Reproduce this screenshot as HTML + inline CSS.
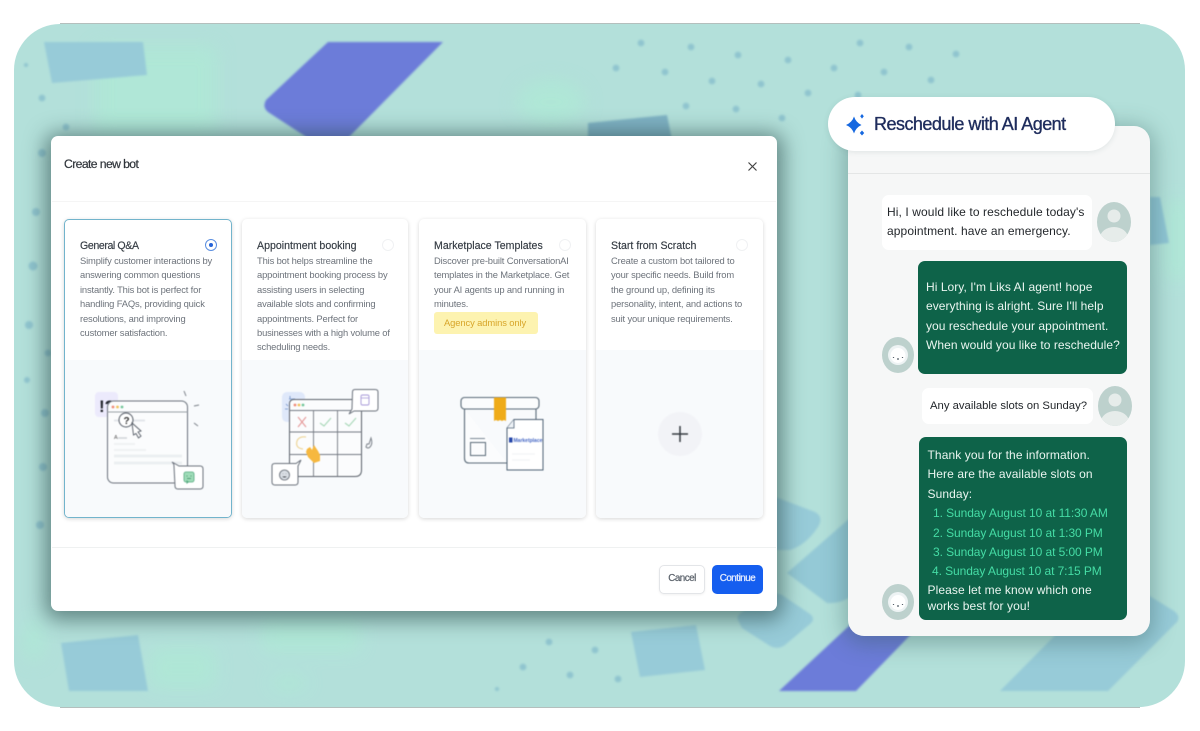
<!DOCTYPE html>
<html><head><meta charset="utf-8"><style>
html,body{margin:0;padding:0;background:#fff;width:1200px;height:731px;overflow:hidden}
*{box-sizing:border-box}
body{font-family:"Liberation Sans",sans-serif;position:relative}
.a{position:absolute}
.t{position:absolute;white-space:nowrap}
#bg{position:absolute;left:14px;top:24px;width:1171px;height:683px;border-radius:46px;background:#b3e0da;overflow:hidden}
#dlg{position:absolute;left:51px;top:136px;width:726px;height:475px;background:#fff;border-radius:7px;box-shadow:0 3px 20px 6px rgba(40,70,70,.58)}
.card{position:absolute;top:219px;height:299px;background:#fff;border-radius:5px;box-shadow:0 1px 4px rgba(0,0,0,.16);overflow:hidden}
.img{position:absolute;left:0;right:0;bottom:0;background:#f8fafc}
.h{font-size:10.6px;color:#333a42;line-height:14px;-webkit-text-stroke:.15px #333a42}
.d{font-size:9.4px;color:#6d737b;line-height:14px;letter-spacing:-.15px}
.radio{position:absolute;top:239px;width:12px;height:12px;border-radius:50%;border:1.5px solid #f0f1f3;background:#fff}
#chat{position:absolute;left:848px;top:126px;width:302px;height:510px;background:#f6f7f7;border-radius:16px;box-shadow:0 4px 22px 4px rgba(50,90,90,.38)}
.m{font-size:12px;line-height:16px;letter-spacing:.1px}
.w{color:#eaf5f0}
.g{color:#45dca5;letter-spacing:-.08px}
.k{color:#23272b}
.bb{position:absolute;background:#0e6349;border-radius:7px}
.wb{position:absolute;background:#fff;border-radius:7px}
.soft{filter:blur(.35px)}
.soft2{filter:blur(.5px)}
</style></head><body>
<div id="bg"></div>
<svg class="a" style="left:0;top:0" width="1200" height="731" viewBox="0 0 1200 731">
<defs>
<clipPath id="c"><rect x="14" y="24" width="1171" height="683" rx="46"/></clipPath>
<filter id="b1"><feGaussianBlur stdDeviation="1"/></filter>
<filter id="b2"><feGaussianBlur stdDeviation="9"/></filter>
</defs>
<g clip-path="url(#c)">
<g filter="url(#b2)" fill="#afe8d6" opacity=".85">
<rect x="95" y="46" width="122" height="88"/>
<rect x="262" y="620" width="98" height="32"/>
<rect x="150" y="648" width="66" height="40"/>
<ellipse cx="551" cy="102" rx="34" ry="22"/>
<ellipse cx="289" cy="683" rx="20" ry="8"/>
<rect x="1165" y="200" width="25" height="80"/>
<ellipse cx="34" cy="640" rx="10" ry="22"/>
</g>
<g filter="url(#b1)">
<path d="M44 42H143L147 75 52 83Z" fill="#97cbd8"/>
<path d="M328 42H443L346 140H311L268 112Q262 107 266 100Z" fill="#6c7bd9"/>
<path d="M588 123L667 115 672 140H588Z" fill="#7fb2c4"/>
<path d="M61 643L138 635 148 691H69Z" fill="#97cbd8"/>
<path d="M631 632L696 625 705 670 640 677Z" fill="#97cbd8"/>
<path d="M738 620Q736 616 742 612L770 595Q776 592 782 595L810 614Q816 619 810 624L785 645Q778 650 770 646L742 628Z" fill="#97cbd8"/>
<path d="M770 495L815 512Q824 517 818 527 806 545 790 550H770Z" fill="#97cbd8"/>
<path d="M787 573L850 518V597Q840 604 827 603Z" fill="#94c9d6"/>
<path d="M779 691H856L920 625 850 625Z" fill="#6c7bd9"/>
<path d="M1000 691H1108L1177 622Q1181 616 1174 611L1140 590 1090 600Z" fill="#97cbd8"/>
<path d="M1150 197H1160L1169 243 1150 245Z" fill="#8fc5d4"/>
<g fill="#90c5cf">
<circle cx="641" cy="43" r="3.4"/><circle cx="691" cy="47" r="3.4"/><circle cx="738" cy="55" r="3.4"/><circle cx="788" cy="60" r="3.4"/><circle cx="860" cy="43" r="3.4"/><circle cx="909" cy="47" r="3.4"/><circle cx="956" cy="54" r="3.4"/><circle cx="616" cy="68" r="3.4"/><circle cx="665" cy="72" r="3.4"/><circle cx="712" cy="81" r="3.4"/><circle cx="761" cy="84" r="3.4"/><circle cx="808" cy="93" r="3.4"/><circle cx="834" cy="68" r="3.4"/><circle cx="884" cy="72" r="3.4"/><circle cx="931" cy="80" r="3.4"/><circle cx="858" cy="95" r="3.4"/><circle cx="686" cy="106" r="3.4"/><circle cx="736" cy="109" r="3.4"/><circle cx="782" cy="118" r="3.4"/>
<circle cx="26" cy="65" r="2"/><circle cx="42" cy="98" r="3.4"/><circle cx="66" cy="127" r="3.4"/><circle cx="42" cy="153" r="4"/><circle cx="36" cy="212" r="4"/><circle cx="33" cy="266" r="4.5"/><circle cx="29" cy="325" r="4"/><circle cx="48" cy="353" r="3.4"/><circle cx="27" cy="380" r="3"/><circle cx="45" cy="413" r="4"/><circle cx="43" cy="467" r="4"/><circle cx="40" cy="525" r="4"/>
<circle cx="549" cy="642" r="3.4"/><circle cx="595" cy="650" r="3.4"/><circle cx="523" cy="667" r="3.4"/><circle cx="570" cy="675" r="3.4"/><circle cx="497" cy="689" r="2"/><circle cx="618" cy="679" r="3.4"/>
</g>
</g>
</g>
<path d="M60 23.500H1140M60 707.500H1140" stroke="#b4bfbd" stroke-width="1"/>
</svg>

<div id="dlg"></div>
<div class="a" style="left:52px;top:201px;width:724px;height:1px;background:#f5f5f5"></div>
<div class="a" style="left:52px;top:547px;width:724px;height:1px;background:#eff1f1"></div>
<div class="soft">
<div class="t" style="left:64px;top:157px;font-size:12.2px;line-height:15px;color:#30353b;-webkit-text-stroke:.2px #30353b;letter-spacing:-.6px">Create new bot</div>
<svg class="a" style="left:747px;top:161px" width="11" height="11" viewBox="0 0 11 11"><path d="M1.500 1.500L9.500 9.500M9.500 1.500L1.500 9.500" stroke="#444" stroke-width="1.200"/></svg>
</div>

<div class="card" style="left:64px;width:168px;border:1.5px solid #72b4cc"><div class="img" style="height:157px"></div></div>
<div class="card" style="left:242px;width:166px"><div class="img" style="height:158px"></div></div>
<div class="card" style="left:419px;width:167px"><div class="img" style="height:168px"></div></div>
<div class="card" style="left:596px;width:167px"><div class="img" style="height:168px"></div></div>

<div class="soft">
<div class="t h" style="left:80px;top:238.500px;letter-spacing:-.4px">General Q&amp;A</div>
<div class="t d" style="left:80px;top:254px;line-height:14.400px">Simplify customer interactions by<br>answering common questions<br>instantly. This bot is perfect for<br>handling FAQs, providing quick<br>resolutions, and improving<br>customer satisfaction.</div>
<div class="t h" style="left:257px;top:238.500px">Appointment booking</div>
<div class="t d" style="left:257px;top:254px;line-height:14.400px">This bot helps streamline the<br>appointment booking process by<br>assisting users in selecting<br>available slots and confirming<br>appointments. Perfect for<br>businesses with a high volume of<br>scheduling needs.</div>
<div class="t h" style="left:434px;top:238.500px">Marketplace Templates</div>
<div class="t d" style="left:434px;top:254px;line-height:14.400px">Discover pre-built ConversationAI<br>templates in the Marketplace. Get<br>your AI agents up and running in<br>minutes.</div>
<div class="a" style="left:434px;top:312px;width:104px;height:22px;background:#fdf3b0;border-radius:3px"></div>
<div class="t" style="left:444px;top:316px;font-size:9.400px;line-height:14px;color:#d8a62a;letter-spacing:-.1px">Agency admins only</div>
<div class="t h" style="left:611px;top:238.500px">Start from Scratch</div>
<div class="t d" style="left:611px;top:254px;line-height:14.400px">Create a custom bot tailored to<br>your specific needs. Build from<br>the ground up, defining its<br>personality, intent, and actions to<br>suit your unique requirements.</div>
</div>

<div class="radio" style="left:205px;border-color:#5b8fe0;background:#fff"><div class="a" style="left:2.500px;top:2.500px;width:4px;height:4px;border-radius:50%;background:#2563d8"></div></div>
<div class="radio" style="left:382px"></div>
<div class="radio" style="left:559px"></div>
<div class="radio" style="left:736px"></div>

<svg class="a soft2" style="left:0;top:0" width="1200" height="731" viewBox="0 0 1200 731">
<!-- card 1 illustration -->
<rect x="95" y="392" width="23" height="25" rx="4" fill="#eceafc"/>
<text x="99" y="412" font-family="Liberation Sans,sans-serif" font-size="17" font-weight="700" fill="#23262c">!?</text>
<rect x="107.500" y="401" width="80" height="82" rx="6" fill="#fbfcfd" stroke="#6b727c" stroke-width="1"/>
<path d="M107.500 412H187.500" stroke="#9a9fa6"/>
<circle cx="113" cy="407" r="1.400" fill="#ef8a78"/><circle cx="117.500" cy="407" r="1.400" fill="#f0c15a"/><circle cx="122" cy="407" r="1.400" fill="#73c69a"/>
<path d="M114 420.500H145" stroke="#e3e6ea" stroke-width="2"/>
<circle cx="126" cy="420" r="7" fill="#fff" stroke="#555c66"/>
<text x="123.500" y="424" font-family="Liberation Sans,sans-serif" font-size="10" font-weight="700" fill="#333">?</text>
<path d="M132 423L141 431 138 432 141 436 138.500 438 136 433.500 133.500 435Z" fill="#fff" stroke="#555c66" stroke-width=".9"/>
<text x="114" y="439" font-family="Liberation Sans,sans-serif" font-size="5.500" fill="#555">A</text>
<path d="M118 438H127" stroke="#d0d4d9" stroke-width="1.500"/>
<path d="M114 444H135M114 450H146" stroke="#eff1f3" stroke-width="2"/>
<path d="M114 456H182M114 463H182" stroke="#eceff1" stroke-width="3"/>
<path d="M186 396L184 391M194 406L199 405M194 423L198 426" stroke="#7a8088" stroke-width="1"/>
<path d="M174 466Q174 464 173 463L172 462 179 466H200Q203 466 203 469V486Q203 489 200 489H178Q175 489 175 486Z" fill="#fff" stroke="#6b727c"/>
<rect x="184" y="472" width="10" height="10" rx="2" fill="#9fdcb8" stroke="#55a97f" stroke-width=".8"/>
<path d="M186.500 480V484L189 482" fill="#55a97f"/>
<path d="M187 475.500V476.500M191 475.500V476.500M187 478.500H191" stroke="#3d8762" stroke-width=".8"/>
<!-- card 2 illustration -->
<rect x="282" y="392" width="23" height="30" rx="5" fill="#dfe8fa"/>
<path d="M289 399H295M286 404L288 406M285 409H288M290 396V399" stroke="#6e8ec6" stroke-width=".8"/>
<path d="M289.500 404Q289.500 399.500 294 399.500H355Q361.500 399.500 361.500 405V470Q361.500 476.500 355 476.500H295Q289.500 476.500 289.500 470Z" fill="#fbfcfd" stroke="#5a6069" stroke-width="1"/>
<path d="M289.500 410.500H361.500M289.500 432H361.500M289.500 454.500H361.500M313.500 410.500V476.500M337.500 410.500V476.500" stroke="#747a83" stroke-width=".9"/>
<circle cx="295" cy="405" r="1.400" fill="#ef8a78"/><circle cx="299" cy="405" r="1.400" fill="#f0c15a"/><circle cx="303" cy="405" r="1.400" fill="#73c69a"/>
<path d="M298 417L306 427M306 417L298 427" stroke="#e59a9a" stroke-width="1.100"/>
<path d="M320 423L324 426 331 418M345 423L349 426 356 418" fill="none" stroke="#a8d8b8" stroke-width="1.100"/>
<path d="M306 437Q299 436 297 441 295 448 303 449" fill="none" stroke="#eed69a" stroke-width="1.200"/>
<path d="M307 449L310 447 312 450 314 445 318 451 320 455 320 461 314 463 308 457 306 452Z" fill="#f6b83f"/>
<path d="M355 389.500H375Q378 389.500 378 392V408Q378 411 375 411H354L349 414 352 409 352.500 392Q352.500 389.500 355 389.500Z" fill="#fff" stroke="#6b727c"/>
<rect x="361" y="395" width="8" height="10" rx="1.500" fill="none" stroke="#a79ad8" stroke-width=".9"/>
<path d="M361 398H369" stroke="#a79ad8" stroke-width=".8"/>
<path d="M275 463.500H296L301 460 298 466V482Q298 485 295 485H275Q272 485 272 482V466Q272 463.500 275 463.500Z" fill="#fff" stroke="#6b727c"/>
<circle cx="284.500" cy="475" r="5" fill="#d9dee4" stroke="#5f6670" stroke-width=".8"/>
<path d="M282.500 476.500Q284.500 478 286.500 476.500M283 473.500V474M286 473.500V474" stroke="#5f6670" stroke-width=".6"/>
<path d="M371 438Q373 444 370 447 368 449 366 447L367 444 369 444Q370 441 371 438Z" fill="none" stroke="#7a8088" stroke-width="1"/>
<!-- card 3 illustration -->
<path d="M464.500 409V458Q464.500 463 469 463H507M536 409V419" fill="#fbfcfd" stroke="#5a6a78" stroke-width="1.100"/>
<rect x="461" y="397.500" width="78" height="11.500" rx="3.500" fill="#fbfcfd" stroke="#5a6a78" stroke-width="1.100"/>
<path d="M494 397.500H506V421L504 420 502 421 500 420 498 421 496 420 494 421Z" fill="#efab18"/>
<path d="M470 438.500H485" stroke="#7b8894" stroke-width="1"/>
<rect x="470.500" y="442.500" width="15" height="13" fill="none" stroke="#5a6a78" stroke-width="1"/>
<path d="M514 419.500H543V470H507V428Z" fill="#fff" stroke="#4f6275" stroke-width="1"/>
<path d="M507 428L514 428 514 419.500" fill="#eef2f6" stroke="#4f6275" stroke-width=".8"/>
<rect x="509" y="437.500" width="3.500" height="5" fill="#2546a8"/>
<text x="513.500" y="442" font-family="Liberation Sans,sans-serif" font-size="5" font-weight="700" fill="#4466c4">Marketplace</text>
<path d="M512 454H535M512 460H530" stroke="#f0f2f4"/>
<!-- card 4 -->
<circle cx="680" cy="434" r="22" fill="#f2f3f7"/>
<path d="M680 426V442M672 434H688" stroke="#343a40" stroke-width="1.500"/>
</svg>

<div class="soft">
<div class="a" style="left:659px;top:565px;width:46px;height:29px;background:#fff;border:1px solid #e3e5e8;border-radius:5px;box-shadow:0 1px 2px rgba(0,0,0,.06)"></div>
<div class="t" style="left:659px;top:572px;width:46px;text-align:center;font-size:9.800px;line-height:14px;color:#596069;-webkit-text-stroke:.2px #596069;letter-spacing:-.5px">Cancel</div>
<div class="a" style="left:712px;top:565px;width:51px;height:29px;background:#155eef;border-radius:5px"></div>
<div class="t" style="left:712px;top:572px;width:51px;text-align:center;font-size:9.800px;line-height:14px;color:#dfe9ff;-webkit-text-stroke:.3px #dfe9ff;letter-spacing:-.45px">Continue</div>
</div>

<div id="chat"></div>
<div class="a" style="left:848px;top:173px;width:302px;height:1px;background:#e4e6e6"></div>
<div class="a" style="left:828px;top:97px;width:287px;height:54px;background:#fff;border-radius:27px;box-shadow:0 1px 6px rgba(60,90,90,.12)"></div>
<svg class="a" style="left:843px;top:112px" width="24" height="26" viewBox="0 0 24 26">
<path d="M11 4.500Q13 10.500 18.500 13 13 15.500 11 21.500 9 15.500 3 13 9 10.500 11 4.500Z" fill="#1668e0"/>
<path d="M19 2L20.800 4.300 19 6.600 17.200 4.300ZM19 18.500L21.200 21 19 23.500 16.800 21Z" fill="#1668e0"/>
</svg>
<div class="soft">
<div class="t" style="left:874px;top:114px;font-size:18px;line-height:21px;color:#1e2c5c;-webkit-text-stroke:.35px #1e2c5c;letter-spacing:-.52px">Reschedule with AI Agent</div>
</div>

<div class="wb" style="left:882px;top:195px;width:210px;height:55px"></div>
<div class="bb" style="left:918px;top:261px;width:209px;height:113px"></div>
<div class="wb" style="left:922px;top:388px;width:171px;height:36px"></div>
<div class="bb" style="left:919px;top:437px;width:208px;height:183px"></div>

<svg class="a" style="left:0;top:0" width="1200" height="731" viewBox="0 0 1200 731">
<defs>
<clipPath id="a1"><ellipse cx="1114" cy="222" rx="17" ry="20"/></clipPath>
<clipPath id="a2"><ellipse cx="1115" cy="406" rx="17" ry="20"/></clipPath>
</defs>
<ellipse cx="1114" cy="222" rx="17" ry="20" fill="#bdd1cd"/>
<g clip-path="url(#a1)"><circle cx="1114" cy="216" r="6.500" fill="#e6ecea"/><ellipse cx="1114" cy="238" rx="14" ry="11" fill="#e6ecea"/></g>
<ellipse cx="1115" cy="406" rx="17" ry="20" fill="#bdd1cd"/>
<g clip-path="url(#a2)"><circle cx="1115" cy="400" r="6.500" fill="#e6ecea"/><ellipse cx="1115" cy="422" rx="14" ry="11" fill="#e6ecea"/></g>
<ellipse cx="898" cy="355" rx="16" ry="18" fill="#bdd1cd"/>
<circle cx="898" cy="355" r="10" fill="#eef3f4"/>
<circle cx="898" cy="355.500" r="7.500" fill="#fff"/>
<path d="M893.500 357V358M897 359H899M902.500 357V358" stroke="#56606a" stroke-width="1.200"/>
<ellipse cx="898" cy="602" rx="16" ry="18" fill="#bdd1cd"/>
<circle cx="898" cy="602" r="10" fill="#eef3f4"/>
<circle cx="898" cy="602.500" r="7.500" fill="#fff"/>
<path d="M893.500 604V605M897 606H899M902.500 604V605" stroke="#56606a" stroke-width="1.200"/>
</svg>

<div class="soft">
<div class="t m k" style="left:887px;top:203px;line-height:19px">Hi, I would like to reschedule today's<br>appointment. have an emergency.</div>
<div class="t m w" style="left:926px;top:277.500px;line-height:19.500px;letter-spacing:.05px">Hi Lory, I'm Liks AI agent! hope<br>everything is alright. Sure I'll help<br>you reschedule your appointment.<br>When would you like to reschedule?</div>
<div class="t k" style="left:930px;top:398px;font-size:11.300px;line-height:16px">Any available slots on Sunday?</div>
<div class="t m w" style="left:927.500px;top:447px">Thank you for the information.</div>
<div class="t m w" style="left:927.500px;top:466px">Here are the available slots on</div>
<div class="t m w" style="left:927.500px;top:486px">Sunday:</div>
<div class="t m g" style="left:933px;top:505px">1. Sunday August 10 at 11:30 AM</div>
<div class="t m g" style="left:933px;top:525px">2. Sunday August 10 at 1:30 PM</div>
<div class="t m g" style="left:933px;top:544px">3. Sunday August 10 at 5:00 PM</div>
<div class="t m g" style="left:932px;top:563px">4. Sunday August 10 at 7:15 PM</div>
<div class="t m w" style="left:927.500px;top:581.500px">Please let me know which one</div>
<div class="t m w" style="left:927.500px;top:598px">works best for you!</div>
</div>
</body></html>
